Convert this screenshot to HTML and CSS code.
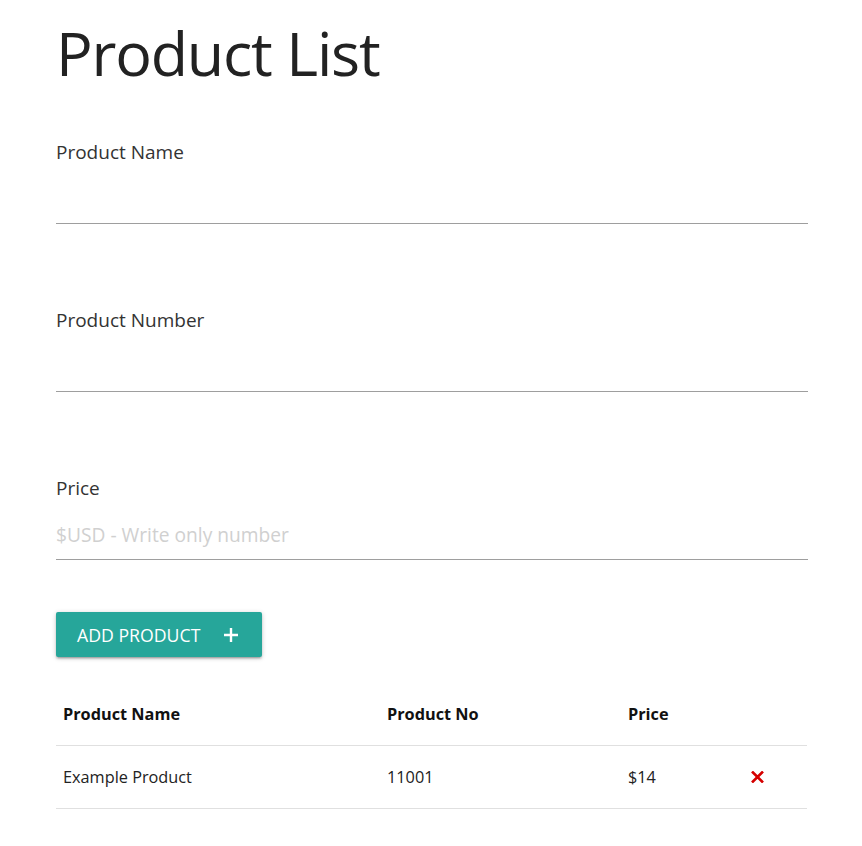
FILE: index.html
```html
<!DOCTYPE html>
<html lang="en">
<head>
<meta charset="utf-8">
<title>Product List</title>
<link rel="stylesheet" href="styles.css">
</head>
<body>
<div class="container">
  <h1 class="title">Product List</h1>
  <form class="form">
    <div class="field">
      <label class="label" for="name">Product Name</label>
      <input class="input" id="name" type="text">
    </div>
    <div class="field">
      <label class="label" for="number">Product Number</label>
      <input class="input" id="number" type="text">
    </div>
    <div class="field">
      <label class="label" for="price">Price</label>
      <input class="input" id="price" type="text" placeholder="$USD - Write only number">
    </div>
    <button class="btn" type="button">ADD PRODUCT
      <svg class="btn-icon" viewBox="0 0 14 14" width="14" height="14"><path d="M7 0v14M0 7h14" stroke="#fff" stroke-width="2.4" fill="none"/></svg>
    </button>
  </form>
  <table class="table">
    <thead>
      <tr>
        <th class="c1">Product Name</th>
        <th class="c2">Product No</th>
        <th class="c3">Price</th>
        <th class="c4"></th>
      </tr>
    </thead>
    <tbody>
      <tr>
        <td>Example Product</td>
        <td>11001</td>
        <td>$14</td>
        <td><svg class="del" viewBox="0 0 13 12" width="13" height="12"><path d="M1 0.5L12 11.5M12 0.5L1 11.5" stroke="#d50000" stroke-width="2.6" fill="none"/></svg></td>
      </tr>
    </tbody>
  </table>
</div>
</body>
</html>
```

FILE: styles.css
```css
html, body {
  margin: 0;
  padding: 0;
  background: #fff;
}
body {
  font-family: "Open Sans", "Noto Sans", sans-serif;
  color: rgba(0, 0, 0, 0.87);
}
.container {
  padding: 0 54px 0 56px;
}
.title {
  margin: 0;
  padding-top: 15px;
  font-size: 61px;
  line-height: 76px;
  font-weight: 400;
  letter-spacing: -1.2px;
  color: #222;
}
.form {
  display: flex;
  flex-direction: column;
  align-items: flex-start;
  padding-top: 49px;
}
.field {
  display: flex;
  flex-direction: column;
  width: 100%;
  margin-bottom: 84px;
}
.field:last-of-type {
  margin-bottom: 52px;
}
.label {
  font-size: 19px;
  line-height: 24px;
  color: #333;
  margin-bottom: 14px;
}
.input {
  box-sizing: content-box;
  height: 41px;
  padding: 0 0 4px 0;
  margin: 0;
  border: none;
  border-bottom: 1px solid #9e9e9e;
  outline: none;
  font-family: inherit;
  font-size: 19.2px;
  background: transparent;
}
.input::placeholder {
  color: #d0d0d0;
}
.btn {
  display: flex;
  align-items: center;
  gap: 24px;
  height: 45px;
  padding: 0 24px 0 21px;
  border: none;
  border-radius: 2px;
  background: #26a69a;
  color: #fff;
  font-family: inherit;
  font-size: 17.7px;
  box-shadow: 0 2px 2px 0 rgba(0,0,0,0.14), 0 3px 1px -2px rgba(0,0,0,0.12), 0 1px 5px 0 rgba(0,0,0,0.2);
}
.btn-icon {
  display: block;
}
.table {
  width: 751px;
  margin-top: 26px;
  border-collapse: collapse;
  font-size: 16.3px;
}
.table tr {
  border-bottom: 1px solid rgba(0, 0, 0, 0.12);
}
.table th, .table td {
  text-align: left;
  padding: 19px 7px;
  line-height: 24px;
  vertical-align: middle;
}
.table th {
  font-weight: 700;
  color: #111;
}
.table td {
  color: #222;
}
.c1 { width: 310px; }
.c2 { width: 227px; }
.c3 { width: 109px; }
.del {
  display: block;
}
```
